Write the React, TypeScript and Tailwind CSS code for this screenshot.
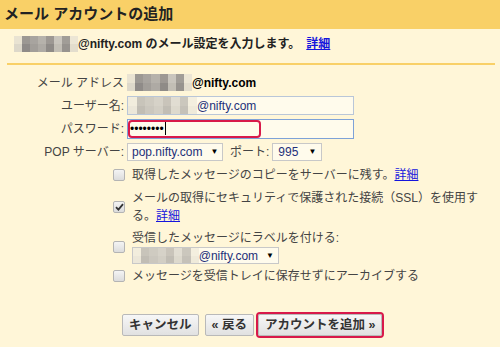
import React from "react";

const font = { fontFamily: '"Liberation Sans", Arial, "Noto Sans CJK JP", sans-serif' };

const shades = [
  ["#e9e3d2", "#9c9893", "#a8a49f", "#b6b2ab", "#9d9893", "#c9c5bd", "#a19d97", "#ece6d5"],
  ["#ddd8ca", "#8f8b88", "#a29e99", "#aeaaa4", "#8f8b87", "#c2beb5", "#97938e", "#e3ddcd"],
];

function Mosaic({ w, h, light = false }: { w: number; h: number; light?: boolean }) {
  const cols = shades[0].length;
  return (
    <div className="flex flex-col" style={{ width: w, height: h, opacity: light ? 0.55 : 1 }}>
      {shades.map((row, r) => (
        <div key={r} className="flex flex-1">
          {row.slice(0, cols).map((c, i) => (
            <div key={i} className="flex-1" style={{ background: c }} />
          ))}
        </div>
      ))}
    </div>
  );
}

function Arrow() {
  return <span className="ml-auto pl-2 text-[8px] text-black">▼</span>;
}

function Checkbox({ checked = false }: { checked?: boolean }) {
  return (
    <span className="flex h-[12px] w-[12px] shrink-0 items-center justify-center rounded-[2px] border border-[#b4b4b4] bg-gradient-to-b from-[#f4f4f4] to-[#dcdcdc]">
      {checked && (
        <svg width="9" height="8" viewBox="0 0 9 8">
          <path d="M1 4.2 L3.4 6.6 L8 1.2" fill="none" stroke="#333" strokeWidth="1.8" />
        </svg>
      )}
    </span>
  );
}

function Link({ children }: { children: React.ReactNode }) {
  return <span className="text-[#1515dd] underline">{children}</span>;
}

function Label({ children }: { children: React.ReactNode }) {
  return <div className="w-[127px] shrink-0 pr-[3px] text-right text-[#444]">{children}</div>;
}

function Button({ children }: { children: React.ReactNode }) {
  return (
    <div className="flex h-[22px] items-center rounded-[2px] border border-[#b9b9b9] bg-gradient-to-b from-[#f7f7f7] to-[#e1e1e1] px-[6px] text-[12.5px] font-bold text-[#333]">
      {children}
    </div>
  );
}

export default function App() {
  return (
    <div className="h-[347px] w-[500px] overflow-hidden bg-[#fff6d8] text-[12px] text-[#222]" style={font}>
      <div className="flex h-[29px] items-center bg-[#f9d067] pl-[4px] text-[15px] font-bold text-[#222]">
        メール アカウントの追加
      </div>

      <div className="flex h-[30px] items-center pl-[14px] font-bold">
        <Mosaic w={64} h={16} />
        <span>@nifty.com のメール設定を入力します。</span>
        <span className="ml-[6px] font-bold">
          <Link>詳細</Link>
        </span>
      </div>

      <div className="ml-[7px] mr-[5px] mt-[4px] h-[2px] bg-[#f9d067]" />

      <div className="mt-[6px] flex flex-col">
        <div className="flex h-[23px] items-center">
          <Label>メール アドレス</Label>
          <Mosaic w={65} h={17} />
          <span className="font-bold text-black">@nifty.com</span>
        </div>

        <div className="flex h-[23px] items-center">
          <Label>ユーザー名:</Label>
          <div className="flex h-[19px] w-[227px] items-center border border-[#b9c6d8] bg-[#fffbec] text-[#23307a]">
            <Mosaic w={69} h={17} light />
            <span>@nifty.com</span>
          </div>
        </div>

        <div className="flex h-[23px] items-center">
          <Label>パスワード:</Label>
          <div className="relative flex h-[20px] w-[227px] items-center border border-[#7ea2d8] bg-[#fffbec] pl-[2px]">
            <span className="text-[12px] leading-none text-black">••••••••</span>
            <span className="ml-[1px] h-[13px] w-[1px] bg-black" />
            <div className="absolute left-0 top-0 h-[18px] w-[133px] rounded-[4px] border-2 border-[#d8194a]" />
          </div>
        </div>

        <div className="flex h-[23px] items-center">
          <Label>POP サーバー:</Label>
          <div className="flex h-[18px] w-[96px] items-center border border-[#c8c8c8] bg-[#fffbec] pl-[4px] pr-[4px] text-[#23307a]">
            pop.nifty.com
            <Arrow />
          </div>
          <span className="ml-[7px] text-[#444]">ポート:</span>
          <div className="ml-[3px] flex h-[18px] w-[50px] items-center border border-[#c8c8c8] bg-[#fffbec] pl-[5px] pr-[5px] text-[#23307a]">
            995
            <Arrow />
          </div>
        </div>
      </div>

      <div className="mt-[3px] flex flex-col pl-[113px] leading-[18px] text-[#444]">
        <div className="flex items-center gap-[7px]">
          <Checkbox />
          <span>
            取得したメッセージのコピーをサーバーに残す。<Link>詳細</Link>
          </span>
        </div>

        <div className="mt-[5px] flex items-center gap-[7px]">
          <Checkbox checked />
          <span>
            メールの取得にセキュリティで保護された接続（SSL）を使用す
            <br />
            る。<Link>詳細</Link>
          </span>
        </div>

        <div className="mt-[4px] flex items-center gap-[7px]">
          <Checkbox />
          <div className="flex flex-col">
            <span>受信したメッセージにラベルを付ける:</span>
            <div className="flex h-[17px] w-[147px] items-center border border-[#c8c8c8] bg-[#fffbec] pr-[4px] leading-none text-[#23307a]">
              <Mosaic w={71} h={15} light />
              <span>@nifty.com</span>
              <Arrow />
            </div>
          </div>
        </div>

        <div className="mt-[3px] flex items-center gap-[7px]">
          <Checkbox />
          <span>メッセージを受信トレイに保存せずにアーカイブする</span>
        </div>
      </div>

      <div className="mt-[27px] flex items-center pl-[122px]">
        <Button>キャンセル</Button>
        <div className="ml-[6px]">
          <Button>« 戻る</Button>
        </div>
        <div className="ml-[2px] rounded-[4px] border-2 border-[#d8194a]">
          <Button>アカウントを追加 »</Button>
        </div>
      </div>
    </div>
  );
}
